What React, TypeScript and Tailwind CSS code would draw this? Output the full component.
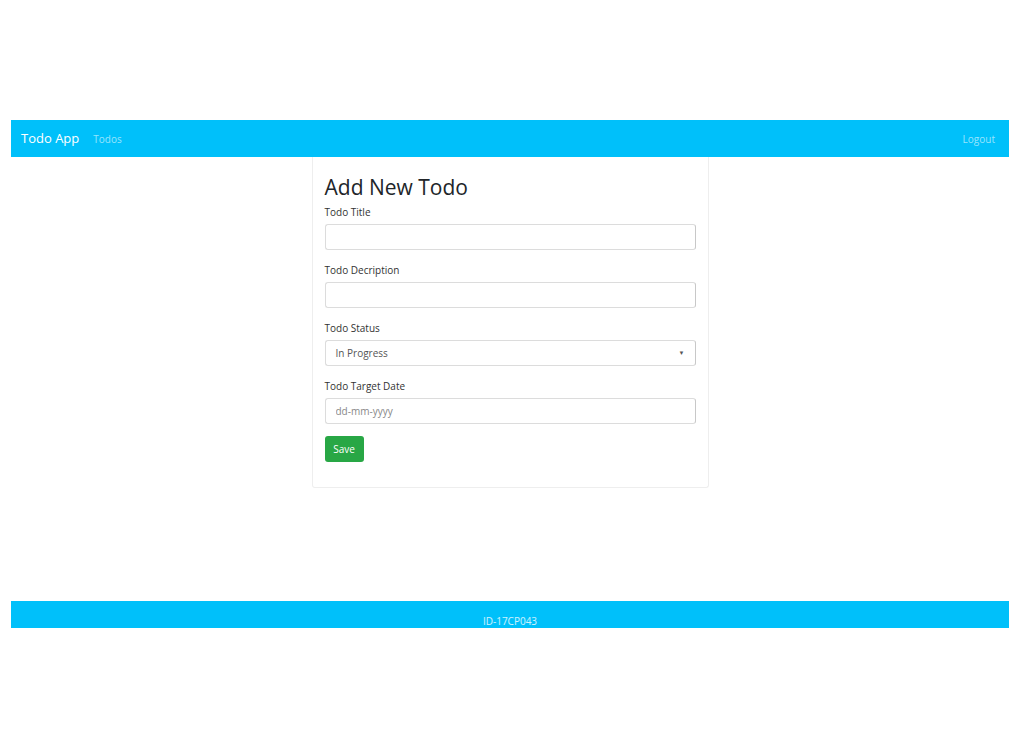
// App.tsx
//
// Todo app "Add New Todo" screen: cyan top bar, a centred form card and a
// cyan footer strip. Everything flows; no absolute positioning.

const font = { fontFamily: '"Open Sans", "Noto Sans", Arial, sans-serif' };

function Field({ label, children }: { label: string; children: React.ReactNode }) {
  return (
    <div className="mb-[13px] flex flex-col">
      <label className="mb-[5px] text-[10px] leading-[14px] text-[#333]">{label}</label>
      {children}
    </div>
  );
}

const inputCls =
  "h-[26px] w-full rounded-[3px] border border-[#dcdcdc] border-r-[#c8c8c8] bg-white px-[10px] text-[10px] text-[#555] outline-none";

export default function App(): JSX.Element {
  return (
    <div className="flex h-[740px] w-[1022px] flex-col bg-white pl-[11px] pr-[13px] pt-[120px]" style={font}>
      <nav className="flex h-[37px] items-center bg-[#00c0fa] px-[10px] pt-[1px]">
        <span className="text-[13px] text-white">Todo App</span>
        <span className="ml-[14px] text-[10px] text-white/60">Todos</span>
        <span className="ml-auto mr-[4px] text-[10px] text-white/60">Logout</span>
      </nav>

      <main className="flex h-[444px] justify-center">
        <div className="h-[331px] w-[397px] rounded-b-[3px] border border-t-0 border-[#eeeeee] px-[12px] pt-[17px]">
          <h2 className="mb-[5px] text-[21px] leading-[26px] text-[#212529]">Add New Todo</h2>
          <Field label="Todo Title">
            <input className={inputCls} />
          </Field>
          <Field label="Todo Decription">
            <input className={inputCls} />
          </Field>
          <Field label="Todo Status">
            <div className={`${inputCls} flex items-center justify-between`}>
              <span>In Progress</span>
              <span className="text-[6px] text-[#555]">▼</span>
            </div>
          </Field>
          <Field label="Todo Target Date">
            <input className={`${inputCls} placeholder:text-[#888]`} placeholder="dd-mm-yyyy" />
          </Field>
          <button className="-mt-[1px] block h-[26px] w-[39px] rounded-[3px] bg-[#28a745] text-[10px] text-white">
            Save
          </button>
        </div>
      </main>

      <footer className="flex h-[27px] justify-center bg-[#00c0fa] pt-[13px] text-[10px] leading-[14px] text-white/80">
        ID-17CP043
      </footer>
    </div>
  );
}
